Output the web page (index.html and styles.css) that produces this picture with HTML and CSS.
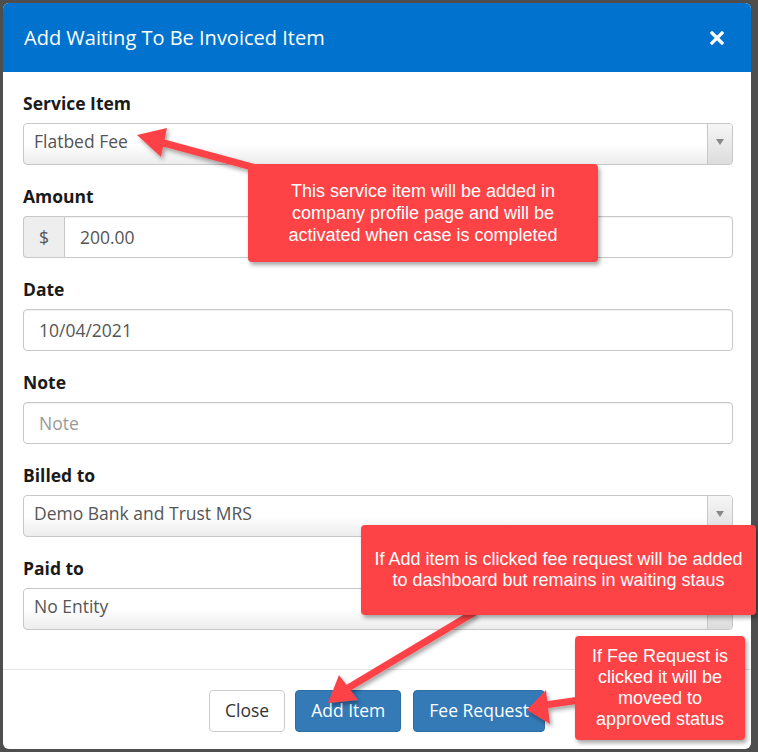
FILE: index.html
```html
<!DOCTYPE html>
<html>
<head>
<meta charset="utf-8">
<link rel="stylesheet" href="styles.css">
</head>
<body>
<div class="stage">
  <div class="modal">
    <div class="modal-header">
      <h4 class="modal-title">Add Waiting To Be Invoiced Item</h4>
      <svg class="close-x" width="14" height="14" viewBox="0 0 14 14"><path d="M2 2 L12 12 M12 2 L2 12" stroke="#fff" stroke-width="3.2" stroke-linecap="square"/></svg>
    </div>
    <div class="modal-body">
      <div class="group">
        <label>Service Item</label>
        <div class="select"><span class="val">Flatbed Fee</span><span class="caret"><i></i></span></div>
      </div>
      <div class="group">
        <label>Amount</label>
        <div class="input-group"><span class="addon">$</span><span class="input ig">200.00</span></div>
      </div>
      <div class="group">
        <label>Date</label>
        <div class="input">10/04/2021</div>
      </div>
      <div class="group">
        <label>Note</label>
        <div class="input placeholder">Note</div>
      </div>
      <div class="group">
        <label>Billed to</label>
        <div class="select"><span class="val">Demo Bank and Trust MRS</span><span class="caret"><i></i></span></div>
      </div>
      <div class="group">
        <label>Paid to</label>
        <div class="select"><span class="val">No Entity</span><span class="caret"><i></i></span></div>
      </div>
    </div>
    <div class="modal-footer">
      <button class="btn btn-default">Close</button>
      <button class="btn btn-primary">Add Item</button>
      <button class="btn btn-primary">Fee Request</button>
    </div>
  </div>

  <svg class="arrows" width="758" height="752" viewBox="0 0 758 752">
    <defs>
      <filter id="sh" x="-20%" y="-20%" width="140%" height="140%">
        <feDropShadow dx="2" dy="3" stdDeviation="2" flood-color="#000" flood-opacity="0.35"/>
      </filter>
    </defs>
    <g fill="#fd4346" stroke="#fd4346" filter="url(#sh)">
      <line x1="300" y1="180" x2="160" y2="142" stroke-width="7"/>
      <polygon points="137,135 167,128 161,157" stroke="none"/>
      <line x1="475" y1="612" x2="348" y2="688" stroke-width="7"/>
      <polygon points="328,703 339,675 358,700" stroke="none"/>
      <line x1="580" y1="700" x2="545" y2="705" stroke-width="7"/>
      <polygon points="527,710 546,690 550,724" stroke="none"/>
    </g>
  </svg>

  <div class="callout c1">This service item will be added in<br>company profile page and will be<br>activated when case is completed</div>
  <div class="callout c2">If Add item is clicked fee request will be added<br>to dashboard but remains in waiting staus</div>
  <div class="callout c3">If Fee Request is<br>clicked it will be<br>moveed to<br>approved status</div>
</div>
</body>
</html>
```

FILE: styles.css
```css
* { box-sizing: border-box; }
html, body { margin: 0; padding: 0; }
body {
  width: 758px;
  height: 752px;
  background: #4e4e4e;
  overflow: hidden;
  font-family: "Open Sans", "Noto Sans", sans-serif;
}
.stage {
  position: relative;
  width: 758px;
  height: 752px;
  padding: 3px 7px 3px 3px;
}
.modal {
  width: 748px;
  height: 746px;
  background: #fff;
  border-radius: 6px;
  overflow: hidden;
  display: flex;
  flex-direction: column;
}
.modal-header {
  height: 69px;
  background: #0173cf;
  display: flex;
  align-items: center;
  justify-content: space-between;
  padding: 0 27px 0 21px;
}
.modal-title {
  margin: 0;
  color: #fff;
  font-weight: 400;
  font-size: 20px;
  letter-spacing: 0;
}
.close-x { display: block; margin-top: 1px; }
.modal-body {
  padding: 20px 18px 19px 20px;
  flex: 0 0 auto;
}
.group { margin-bottom: 20px; }
label {
  display: block;
  font-weight: 700;
  font-size: 17.5px;
  line-height: 22px;
  color: #1a1a1a;
  margin-bottom: 9px;
}
.select, .input {
  height: 42px;
  border: 1px solid #c8c8c8;
  border-radius: 4px;
  font-size: 17.5px;
  color: #555;
  display: flex;
  align-items: center;
}
.select {
  background: linear-gradient(#ffffff 50%, #ececec 100%);
  padding-left: 10px;
  justify-content: space-between;
}
.select .val { padding-bottom: 6px; }
.caret {
  width: 25px;
  align-self: stretch;
  border-left: 1px solid #c8c8c8;
  display: flex;
  justify-content: center;
  padding-top: 15px;
  background: linear-gradient(#f6f6f6, #dcdcdc);
  border-radius: 0 3px 3px 0;
}
.caret i {
  width: 0; height: 0;
  border-left: 4px solid transparent;
  border-right: 4px solid transparent;
  border-top: 6px solid #888;
}
.input {
  padding-left: 15px;
  background: #fff;
  box-shadow: inset 0 1px 1px rgba(0,0,0,0.06);
}
.placeholder { color: #999; }
.input-group { display: flex; }
.addon {
  width: 41px;
  height: 42px;
  border: 1px solid #c8c8c8;
  border-right: 0;
  border-radius: 4px 0 0 4px;
  background: #eee;
  color: #555;
  font-size: 17.5px;
  display: flex;
  align-items: center;
  justify-content: center;
}
.input.ig { flex: 1; border-radius: 0 4px 4px 0; }
.modal-footer {
  border-top: 1px solid #e5e5e5;
  padding: 20px 0 0;
  display: flex;
  justify-content: center;
  gap: 10px;
}
.btn {
  font-family: "Open Sans", "Noto Sans", sans-serif;
  font-size: 17.5px;
  height: 42px;
  border-radius: 4px;
  padding: 0 15px;
  border: 1px solid transparent;
  line-height: 1;
}
.btn-default { background: #fff; color: #333; border-color: #ccc; }
.btn-primary { background: #337ab7; color: #fff; border-color: #2e6da4; }
.btn-primary + .btn-primary { margin-left: 2px; }
.arrows { position: absolute; left: 0; top: 0; pointer-events: none; }
.callout {
  position: absolute;
  background: #fd4346;
  color: #fff;
  font-family: "Liberation Sans", Arial, sans-serif;
  font-size: 18px;
  line-height: 22px;
  text-align: center;
  border-radius: 4px;
  box-shadow: 2px 3px 4px rgba(0,0,0,0.35);
  display: flex;
  align-items: center;
  justify-content: center;
}
.c1 { left: 248px; top: 164px; width: 350px; height: 98px; }
.c2 { left: 361px; top: 525px; width: 395px; height: 90px; line-height: 21px; }
.c3 { left: 575px; top: 636px; width: 170px; height: 104px; line-height: 21px; }
```
